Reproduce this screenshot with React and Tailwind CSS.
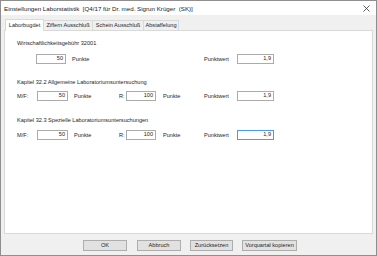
import React from "react";

function Field({ value, className = "", active = false }) {
  return (
    <div
      className={`h-[10px] bg-white border ${
        active ? "border-[#4a9be8]" : "border-[#ababab]"
      } flex items-center justify-end pr-[2px] leading-none ${className}`}
    >
      {value}
    </div>
  );
}

function Tab({ label, active, className = "" }) {
  return (
    <div
      className={`flex items-center justify-center border border-b-0 border-[#d9d9d9] whitespace-nowrap leading-none ${
        active ? "bg-white h-[12px] -mb-px relative z-10" : "bg-[#f0f0f0] h-[10px]"
      } ${className}`}
    >
      {label}
    </div>
  );
}

function KapitelRow({ active }) {
  return (
    <div className="flex items-center">
      <span className="w-[20px]">M/F:</span>
      <Field value="50" className="w-[31px]" />
      <span className="ml-[6px] w-[45px]">Punkte</span>
      <span className="w-[7px]">R:</span>
      <Field value="100" className="w-[30px]" />
      <span className="ml-[7px] w-[41px]">Punkte</span>
      <span className="w-[33px]">Punktwert</span>
      <Field value="1,9" className="w-[37px]" active={active} />
    </div>
  );
}

export default function App() {
  return (
    <div className="w-[377px] h-[256px] bg-[#f0f0f0] border border-[#8f8f8f] flex flex-col font-['Liberation_Sans',Arial,sans-serif] text-[5.6px] leading-[7px] text-[#262626] overflow-hidden">
      <div className="h-[14px] shrink-0 bg-white flex items-center justify-between pl-[3px] pr-[6px] text-[6.2px] text-[#222]">
        <span className="whitespace-nowrap">
          Einstellungen Laborstatistik&nbsp; [Q4/17 für Dr. med. Sigrun Krüger&nbsp; (SK)]
        </span>
        <svg width="7" height="7" viewBox="0 0 7 7" className="shrink-0">
          <path d="M0.5 0.5 L6.5 6.5 M6.5 0.5 L0.5 6.5" stroke="#333" strokeWidth="0.8" fill="none" />
        </svg>
      </div>

      <div className="flex flex-col pl-[3px] pr-[3px]">
        <div className="flex items-end h-[15px] pl-[1px]">
          <Tab label="Laborbugdet" active className="w-[39px]" />
          <Tab label="Ziffern Ausschluß" className="w-[49px] border-l-0" />
          <Tab label="Schein Ausschluß" className="w-[51px] border-l-0" />
          <Tab label="Abstaffelung" className="w-[35px] border-l-0" />
        </div>
        <div className="h-[204px] bg-white border border-[#d9d9d9] pl-[12px] pt-[9px]">
          <div>Wirtschaftlichkeitsgebühr 32001</div>
          <div className="flex items-center mt-[7px]">
            <Field value="50" className="w-[30px] ml-[19px]" />
            <span className="ml-[6px] w-[132px]">Punkte</span>
            <span className="w-[33px]">Punktwert</span>
            <Field value="1,9" className="w-[37px]" />
          </div>

          <div className="mt-[15px]">Kapitel 32.2 Allgemeine Laboratoriumsuntersuchung</div>
          <div className="mt-[5px]">
            <KapitelRow />
          </div>

          <div className="mt-[16px]">Kapitel 32.3 Spezielle Laboratoriumsuntersuchungen</div>
          <div className="mt-[6px]">
            <KapitelRow active />
          </div>
        </div>
      </div>

      <div className="flex-1 flex items-start pt-[6px] pl-[82px] gap-[9px]">
        <button className="w-[44px] h-[11px] mr-[1px] bg-[#e1e1e1] border border-[#adadad] leading-none whitespace-nowrap">OK</button>
        <button className="w-[44px] h-[11px] bg-[#e1e1e1] border border-[#adadad] leading-none whitespace-nowrap">Abbruch</button>
        <button className="w-[43px] h-[11px] bg-[#e1e1e1] border border-[#adadad] leading-none whitespace-nowrap">Zurücksetzen</button>
        <button className="w-[55px] h-[11px] bg-[#e1e1e1] border border-[#adadad] leading-none whitespace-nowrap">Vorquartal kopieren</button>
      </div>
    </div>
  );
}
